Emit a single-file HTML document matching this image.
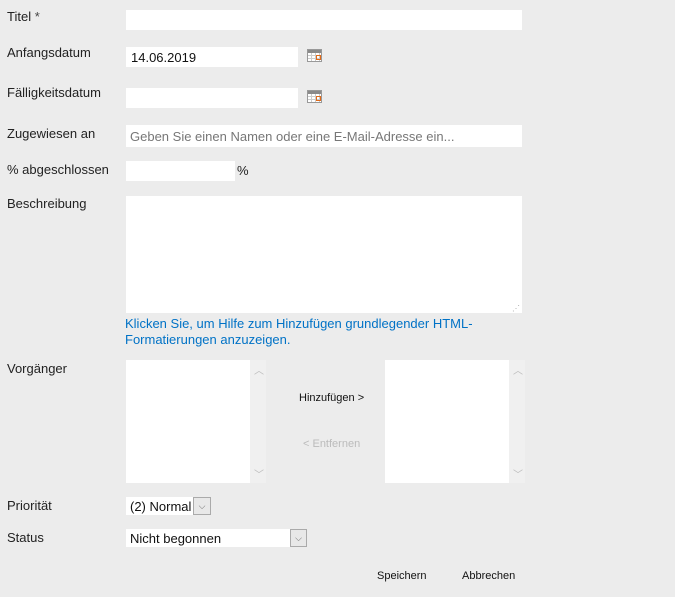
<!DOCTYPE html>
<html><head><meta charset="utf-8"><style>
body{margin:0;width:675px;height:597px;background:#ececec;font-family:"Liberation Sans",Arial,sans-serif;font-size:13px;color:#222;position:relative;overflow:hidden}
.a{position:absolute}
.in{position:absolute;background:#fff}
.lbl{position:absolute;left:7px;font-size:13px;color:#222}
.cal{position:absolute;width:15px;height:13px;background:#fff;border:1px solid #999;box-sizing:border-box}
.cal:before{content:"";position:absolute;left:0;top:0;right:0;height:3px;background:#8a8a8a}
.cal i{position:absolute;left:8px;top:5px;width:3px;height:3px;border:1px solid #e06a1a}
.cal b{position:absolute;left:0;right:0;top:3px;bottom:0;background:repeating-linear-gradient(90deg,transparent 0 3px,#ccc 3px 4px),repeating-linear-gradient(0deg,transparent 0 2px,#ccc 2px 3px)}
.sb{position:absolute;background:#f0f0f0;color:#bbb;font-size:10px;text-align:center}
.dd{position:absolute;border:1px solid #aaa;background:#e8e8e8;box-sizing:border-box;color:#666;font-size:9px;text-align:center}
</style></head><body>
<div class="lbl" style="top:9px">Titel <span style="color:#444">*</span></div>
<div class="in" style="left:126px;top:10px;width:396px;height:20px"></div>

<div class="lbl" style="top:45px">Anfangsdatum</div>
<div class="in" style="left:126px;top:47px;width:172px;height:20px"><span class="a" style="left:5px;top:3px;font-size:13px;color:#111">14.06.2019</span></div>
<div class="cal" style="left:307px;top:49px"><b></b><i></i></div>

<div class="lbl" style="top:85px">Fälligkeitsdatum</div>
<div class="in" style="left:126px;top:88px;width:172px;height:20px"></div>
<div class="cal" style="left:307px;top:90px"><b></b><i></i></div>

<div class="lbl" style="top:126px">Zugewiesen an</div>
<div class="in" style="left:126px;top:125px;width:396px;height:22px"><span class="a" style="left:4px;top:4px;color:#777">Geben Sie einen Namen oder eine E-Mail-Adresse ein...</span></div>

<div class="lbl" style="top:162px">% abgeschlossen</div>
<div class="in" style="left:126px;top:161px;width:109px;height:20px"></div>
<div class="a" style="left:237px;top:163px">%</div>

<div class="lbl" style="top:196px">Beschreibung</div>
<div class="in" style="left:126px;top:196px;width:396px;height:117px"><span class="a" style="right:2px;bottom:0;color:#aaa;font-size:8px">⋰</span></div>
<div class="a" style="left:125px;top:316px;color:#0072c6;line-height:16px;width:400px">Klicken Sie, um Hilfe zum Hinzufügen grundlegender HTML-<br>Formatierungen anzuzeigen.</div>

<div class="lbl" style="top:361px">Vorgänger</div>
<div class="in" style="left:126px;top:360px;width:124px;height:123px"></div>
<div class="sb" style="left:250px;top:360px;width:16px;height:123px"><div class="a" style="left:4px;top:2px">︿</div><div class="a" style="left:4px;bottom:2px">﹀</div></div>
<div class="a" style="left:299px;top:392px;font-size:11px;color:#111">Hinzufügen &gt;</div>
<div class="a" style="left:303px;top:438px;font-size:11px;color:#bbb">&lt; Entfernen</div>
<div class="in" style="left:385px;top:360px;width:124px;height:123px"></div>
<div class="sb" style="left:509px;top:360px;width:16px;height:123px"><div class="a" style="left:4px;top:2px">︿</div><div class="a" style="left:4px;bottom:2px">﹀</div></div>

<div class="lbl" style="top:498px">Priorität</div>
<div class="in" style="left:126px;top:497px;width:67px;height:18px"><span class="a" style="left:4px;top:2px;color:#111">(2) Normal</span></div>
<div class="dd" style="left:193px;top:497px;width:18px;height:18px;line-height:16px">⌵</div>

<div class="lbl" style="top:530px">Status</div>
<div class="in" style="left:126px;top:529px;width:164px;height:18px"><span class="a" style="left:4px;top:2px;color:#111">Nicht begonnen</span></div>
<div class="dd" style="left:290px;top:529px;width:17px;height:18px;line-height:16px">⌵</div>

<div class="a" style="left:377px;top:570px;font-size:11px;color:#111">Speichern</div>
<div class="a" style="left:462px;top:570px;font-size:11px;color:#111">Abbrechen</div>
</body></html>
